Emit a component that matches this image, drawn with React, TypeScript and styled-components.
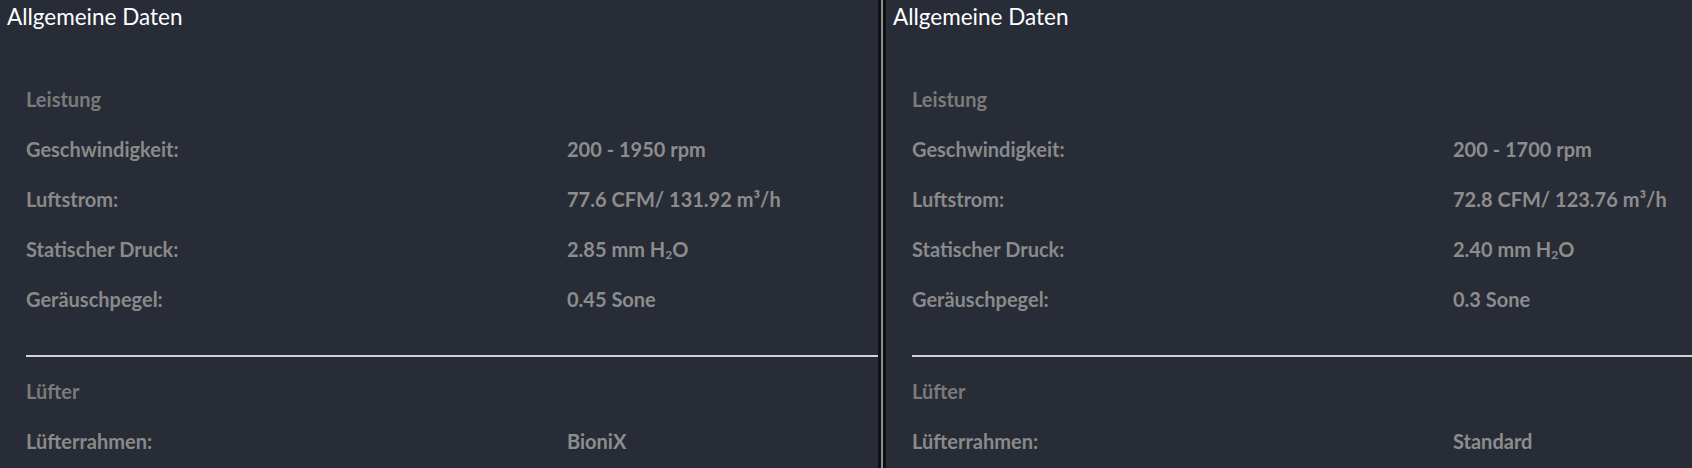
import styled, { createGlobalStyle } from 'styled-components';

const GlobalStyle = createGlobalStyle`
  html, body {
    margin: 0;
    padding: 0;
    background: #272c37;
    overflow: hidden;
  }
  body {
    font-family: Lato, "Open Sans", "Liberation Sans", sans-serif;
  }
`;

interface SpecRow {
  label: string;
  value: React.ReactNode;
}

interface SpecSection {
  title: string;
  rows: SpecRow[];
}

interface Product {
  sections: SpecSection[];
}

const Page = styled.div`
  display: flex;
  width: 100vw;
  height: 468px;
  overflow: hidden;
  background: #272c37;
`;

const Panel = styled.section`
  flex: 0 0 878px;
  width: 878px;
  min-width: 0;
  overflow: hidden;
`;

const Splitter = styled.div`
  flex: 0 0 8px;
  display: flex;
  justify-content: center;
  background: #0e1014;
  &::before {
    content: '';
    width: 2px;
    background: #8c8c8c;
  }
`;

const Heading = styled.h2`
  margin: 0;
  padding: 4px 7px 0;
  font-size: 22.5px;
  line-height: 26px;
  font-weight: 400;
  color: #ffffff;
  white-space: nowrap;
`;

const Body = styled.div`
  padding: 43px 0 0 26px;
`;

const Divider = styled.hr`
  margin: 31px 0 9px;
  border: 0;
  height: 2px;
  background: #d3d3d3;
`;

const Row = styled.div`
  display: grid;
  grid-template-columns: 541px 1fr;
  height: 50px;
  align-items: center;
  font-size: 20px;
  font-weight: 700;
  white-space: nowrap;
`;

const SectionTitle = styled(Row)<{ $first?: boolean }>`
  height: ${p => (p.$first ? 51 : 50)}px;
  color: #7b7b7b;
`;

const Label = styled.span`
  color: #8a8a8a;
`;

const Value = styled.span`
  color: #8d8d8d;
`;

const Sub = styled.sub`
  font-size: 0.6em;
  line-height: 0;
  vertical-align: -0.2em;
`;

const products: Product[] = [
  {
    sections: [
      {
        title: 'Leistung',
        rows: [
          { label: 'Geschwindigkeit:', value: '200 - 1950 rpm' },
          { label: 'Luftstrom:', value: '77.6 CFM/ 131.92 m³/h' },
          { label: 'Statischer Druck:', value: <>2.85 mm H<Sub>2</Sub>O</> },
          { label: 'Geräuschpegel:', value: '0.45 Sone' }
        ]
      },
      {
        title: 'Lüfter',
        rows: [{ label: 'Lüfterrahmen:', value: 'BioniX' }]
      }
    ]
  },
  {
    sections: [
      {
        title: 'Leistung',
        rows: [
          { label: 'Geschwindigkeit:', value: '200 - 1700 rpm' },
          { label: 'Luftstrom:', value: '72.8 CFM/ 123.76 m³/h' },
          { label: 'Statischer Druck:', value: <>2.40 mm H<Sub>2</Sub>O</> },
          { label: 'Geräuschpegel:', value: '0.3 Sone' }
        ]
      },
      {
        title: 'Lüfter',
        rows: [{ label: 'Lüfterrahmen:', value: 'Standard' }]
      }
    ]
  }
];

const ProductPanel = ({ product }: { product: Product }) => (
  <Panel>
    <Heading>Allgemeine Daten</Heading>
    <Body>
      {product.sections.map((section, i) => (
        <div key={section.title}>
          {i > 0 && <Divider />}
          <SectionTitle $first={i === 0}>{section.title}</SectionTitle>
          {section.rows.map(row => (
            <Row key={row.label}>
              <Label>{row.label}</Label>
              <Value>{row.value}</Value>
            </Row>
          ))}
        </div>
      ))}
    </Body>
  </Panel>
);

const App = () => (
  <>
    <GlobalStyle />
    <Page>
      <ProductPanel product={products[0]} />
      <Splitter />
      <ProductPanel product={products[1]} />
    </Page>
  </>
);

export default App;
